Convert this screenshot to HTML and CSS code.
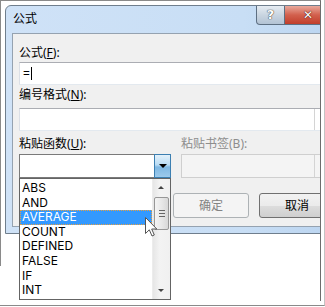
FILE: index.html
```html
<!DOCTYPE html>
<html lang="zh-CN">
<head>
  <meta charset="UTF-8" />
  <title>公式</title>
  <link rel="stylesheet" href="styles.css">
</head>
<body>
<div class="page">
<div class="shot">
  <div class="dialog">
    <div class="titlebar">
      <span class="title">公式</span>
      <div class="caption-btns">
        <span class="help-btn">?</span>
        <span class="close-btn">✕</span>
      </div>
    </div>
    <div class="client">
      <div class="label">公式(<u>F</u>):</div>
      <div class="textbox">=<span class="caret"></span></div>

      <div class="label label-2">编号格式(<u>N</u>):</div>
      <div class="combo combo-wide"><span class="combo-btn"></span></div>

      <div class="columns">
        <div class="col">
          <div class="label">粘贴函数(<u>U</u>):</div>
          <div class="combo combo-func">
            <span class="combo-btn active"><span class="tri"></span></span>
          </div>
        </div>
        <div class="col">
          <div class="label disabled">粘贴书签(B):</div>
          <div class="combo combo-off"><span class="combo-btn"></span></div>
        </div>
      </div>

      <div class="buttons">
        <span class="btn btn-off">确定</span>
        <span class="btn">取消</span>
      </div>
    </div>
  </div>

  <div class="droplist">
    <ul class="items">
      <li>ABS</li>
      <li>AND</li>
      <li class="selected">AVERAGE</li>
      <li>COUNT</li>
      <li>DEFINED</li>
      <li>FALSE</li>
      <li>IF</li>
      <li>INT</li>
    </ul>
    <div class="scrollbar">
      <span class="arrow-up"></span>
      <span class="thumb"><span class="grip"></span></span>
      <span class="arrow-down"></span>
    </div>
  </div>

  <svg class="cursor" width="13" height="21" viewBox="0 0 13 21">
    <path d="M0.5 0.5 L0.5 16.5 L4.3 12.8 L7 19 L9.3 18 L6.7 12 L11.8 12 Z" fill="#fff" stroke="#555" stroke-width="1"/>
  </svg>
</div>
</div>
</body>
</html>
```

FILE: styles.css
```css
html, body {
  margin: 0;
  padding: 0;
  background: #fff;
}
body {
  width: 325px;
  height: 307px;
  overflow: hidden;
  font-family: "Noto Sans", "Noto Sans CJK SC", sans-serif;
  font-size: 12px;
  color: #000;
}
.page {
  width: 324px;
  height: 305px;
  border-right: 1px solid #c4c4c4;
  border-bottom: 1px solid #8a8a8a;
}
.shot {
  position: relative;
  width: 319px;
  height: 300px;
  border-top: 1px solid #8a8a8a;
  border-right: 1px solid #6d6d6d;
  padding-left: 1px;
  overflow: hidden;
}
.shot::before {
  content: "";
  position: absolute;
  left: 0;
  top: 0;
  width: 1px;
  height: 265px;
  background: #8a8a8a;
}
.dialog {
  margin: 4px 0 0 4px;
  width: 340px;
  height: 227px;
  border: 1px solid #6f7e8d;
  border-radius: 6px 6px 0 0;
  background: linear-gradient(90deg, #cfe2f7, #c8def5 70%, #b9d3ef);
}
.titlebar {
  height: 27px;
  display: flex;
  justify-content: space-between;
  align-items: flex-start;
}
.title {
  margin: 5px 0 0 7px;
  line-height: 16px;
}
.caption-btns {
  display: flex;
  margin-right: 14px;
}
.help-btn, .close-btn {
  height: 18px;
  line-height: 18px;
  text-align: center;
  color: #fff;
  font-weight: bold;
  font-family: "DejaVu Sans", sans-serif;
  border: 1px solid #5d6f82;
  border-top: none;
}
.help-btn {
  width: 27px;
  border-radius: 0 0 0 4px;
  background: linear-gradient(#e6ecf2, #c9d5e1 50%, #b3c3d4);
  font-size: 13px;
  text-shadow: 0 0 1px #333, 0 0 1px #333;
}
.close-btn {
  width: 46px;
  border-left: none;
  background: linear-gradient(#e9a99c, #d2604d 50%, #c13e2b);
  font-size: 12px;
  text-shadow: 0 0 1px #400, 0 0 1px #400;
}
.client {
  margin: 0 6px 0 6px;
  height: 194px;
  border: 1px solid #95a2b0;
  background: #f0f0f0;
  padding: 11px 0 0 6px;
  box-sizing: border-box;
}
.label {
  height: 16px;
  line-height: 16px;
}
.label u {
  text-underline-offset: 1px;
}
.label.disabled {
  color: #8d8d8d;
}
.label-2 {
  margin-top: 2px;
}
.textbox {
  margin-top: 1px;
  height: 21px;
  line-height: 21px;
  padding-left: 3px;
  background: #fff;
  border: 1px solid #abadb3;
  border-color: #abadb3 #e2e3ea #e3e9ef #dbdfe6;
}
.caret {
  display: inline-block;
  width: 1px;
  height: 13px;
  background: #000;
  vertical-align: -2px;
  margin-left: 1px;
}
.combo {
  position: relative;
  background: #fff;
  border: 1px solid #abadb3;
  border-color: #abadb3 #dbdfe6 #e3e9ef #dbdfe6;
  box-sizing: border-box;
}
.combo-wide {
  margin-top: 5px;
  height: 23px;
  width: 313px;
}
.combo-btn {
  position: absolute;
  right: 0;
  top: 0;
  bottom: 0;
  width: 16px;
  border-left: 1px solid #c5c8ce;
  background: linear-gradient(#f5f5f5, #e3e3e3);
}
.columns {
  display: flex;
  gap: 10px;
  margin-top: 5px;
}
.col .combo {
  margin-top: 2px;
  height: 24px;
}
.combo-func {
  width: 152px;
  border-color: #7a7a7a;
}
.combo-btn.active {
  top: -1px;
  bottom: -1px;
  right: -1px;
  width: 17px;
  border: 1px solid #3c7fb1;
  background: linear-gradient(#e3f1fb, #b9dcf4 45%, #7fb8e3 55%, #9ccaec);
  box-sizing: border-box;
}
.tri {
  position: absolute;
  left: 4px;
  top: 9px;
  border-left: 4px solid transparent;
  border-right: 4px solid transparent;
  border-top: 4px solid #000;
}
.combo-off {
  width: 151px;
  background: #f4f4f4;
  border-color: #cfcfcf;
}
.combo-off .combo-btn {
  background: #f4f4f4;
  border-left-color: #d4d4d4;
}
.combo-wide .combo-btn {
  background: #fff;
  border-left-color: #d4d4d4;
}
.buttons {
  display: flex;
  gap: 10px;
  margin-top: 15px;
  padding-left: 154px;
}
.btn {
  width: 74px;
  height: 23px;
  line-height: 23px;
  text-align: center;
  border: 1px solid #707070;
  border-radius: 3px;
  background: linear-gradient(#f2f2f2, #ebebeb 50%, #dddddd 51%, #cfcfcf);
}
.btn-off {
  color: #838383;
  border-color: #adb2b5;
  background: #f4f4f4;
}
.droplist {
  position: absolute;
  left: 19px;
  top: 177px;
  width: 150px;
  height: 120px;
  border: 1px solid #646464;
  background: #fff;
  display: flex;
}
.items {
  list-style: none;
  margin: 0;
  padding: 2px 0 0 0;
  flex: 1;
  font-family: Inter, sans-serif;
}
.items li {
  height: 14.6px;
  line-height: 14.6px;
  padding-left: 2px;
  box-sizing: border-box;
}
.items li.selected {
  background: #3399ff;
  color: #fff;
  outline: 1px dotted #e8a040;
  outline-offset: -1px;
}
.scrollbar {
  position: relative;
  width: 17px;
  background: linear-gradient(90deg, #e6e6e6, #f3f3f3 40%, #f0f0f0);
  border-left: 1px solid #ececec;
}
.arrow-up, .arrow-down {
  position: absolute;
  left: 5px;
  border-left: 3px solid transparent;
  border-right: 3px solid transparent;
}
.arrow-up {
  top: 7px;
  border-bottom: 3px solid #444;
}
.arrow-down {
  bottom: 7px;
  border-top: 3px solid #444;
}
.thumb {
  position: absolute;
  left: 1px;
  right: 1px;
  top: 18px;
  height: 33px;
  border: 1px solid #979797;
  border-radius: 2px;
  box-sizing: border-box;
  background: linear-gradient(90deg, #f4f4f4, #e8e8e8 50%, #d8d8d8);
}
.grip {
  position: absolute;
  left: 4px;
  top: 12px;
  width: 6px;
  height: 5px;
  border-top: 1px solid #666;
  border-bottom: 1px solid #666;
  background: linear-gradient(transparent 2px, #666 2px, #666 3px, transparent 3px);
}
.cursor {
  position: absolute;
  left: 145px;
  top: 216px;
}
```
